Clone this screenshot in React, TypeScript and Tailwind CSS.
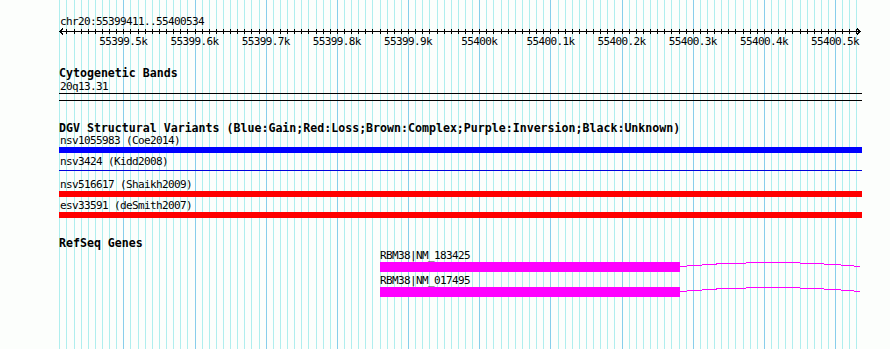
import React from 'react';

const START = 55399411;
const END = 55400534;
const X0 = 60;
const SCALE = 800 / (END - START + 1);
const LEFT = 59; // left edge of the track column

const xOf = (p: number) => X0 + (p - START) * SCALE;
const px = (p: number) => Math.round(xOf(p));

const gridStops: number[] = [];
for (let p = 55399410; p <= 55400530; p += 10) gridStops.push(p);

const majorLabel = (p: number) => {
    const k = p / 1000;
    return `${Number.isInteger(k) ? k : k.toFixed(1)}k`;
};

const variants = [
    { id: 'nsv1055983 (Coe2014)', color: 'bg-[#0000ff]', thin: false },
    { id: 'nsv3424 (Kidd2008)', color: 'bg-[#0000dd]', thin: true },
    { id: 'nsv516617 (Shaikh2009)', color: 'bg-[#ff0000]', thin: false },
    { id: 'esv33591 (deSmith2007)', color: 'bg-[#ff0000]', thin: false },
];

const genes = [
    { name: 'RBM38|NM_183425', exonStart: 55399861, exonEnd: 55400282, end: 55400534 },
    { name: 'RBM38|NM_017495', exonStart: 55399861, exonEnd: 55400282, end: 55400534 },
];

const small = 'text-[11px] tracking-[-0.62px] whitespace-nowrap';

function Grid() {
    return (
        <svg className="absolute inset-0" width={890} height={349} shapeRendering="crispEdges">
            {gridStops.map((p) => {
                const x = px(p) + 0.5;
                return (
                    <line
                        key={p}
                        x1={x}
                        x2={x}
                        y1={0}
                        y2={349}
                        stroke={p % 100 === 0 ? '#87ceeb' : '#afeeee'}
                        strokeWidth={1}
                    />
                );
            })}
        </svg>
    );
}

function Ruler() {
    const ticks = gridStops.filter((p) => p >= START && p <= END);
    const majors = ticks.filter((p) => p % 100 === 0);
    return (
        <svg width={803} height={20} className="block overflow-visible" shapeRendering="crispEdges">
            <line x1={1} x2={801} y1={3.5} y2={3.5} stroke="#000" />
            {ticks.map((p) => {
                const x = px(p) - LEFT + 0.5;
                return <line key={p} x1={x} x2={x} y1={1} y2={6} stroke="#000" />;
            })}
            <polyline points="4,0.5 1,3.5 4,6.5" fill="none" stroke="#000" />
            <polyline points="798,0.5 801,3.5 798,6.5" fill="none" stroke="#000" />
            {majors.map((p) => (
                <text
                    key={p}
                    x={xOf(p) - LEFT}
                    y={17}
                    textAnchor="middle"
                    fontSize={11}
                    letterSpacing={-0.62}
                    fill="#000"
                >
                    {majorLabel(p)}
                </text>
            ))}
        </svg>
    );
}

function Title({ children, className = '' }: { children: React.ReactNode; className?: string }) {
    return <div className={`h-[13px] leading-[13px] text-[11.6px] font-bold whitespace-nowrap ${className}`}>{children}</div>;
}

export default function App() {
    return (
        <div className="relative w-[890px] h-[349px] overflow-hidden bg-[#fcfefc] text-black font-['DejaVu_Sans_Mono',monospace]">
            <Grid />

            <div className="relative pl-[59px] pt-[15px]">
                {/* Overview ruler */}
                <div className={`h-[13px] leading-[13px] pl-px ${small}`}>chr20:55399411..55400534</div>
                <Ruler />

                {/* Cytogenetic bands */}
                <Title className="mt-[19px]">Cytogenetic Bands</Title>
                <div className={`h-[13px] leading-[13px] pl-px ${small}`}>20q13.31</div>
                <div className="h-[8px] w-[803px] border-y border-black" />

                {/* DGV */}
                <Title className="mt-[21px]">
                    DGV Structural Variants (Blue:Gain;Red:Loss;Brown:Complex;Purple:Inversion;Black:Unknown)
                </Title>
                {variants.map((v) => (
                    <div key={v.id} className="mb-[3px]">
                        <div className={`h-[12px] leading-[12px] pl-px ${small}`}>{v.id}</div>
                        <div className="h-[6px] w-[803px]">
                            {v.thin ? (
                                <div className={`mt-[2px] h-px w-full ${v.color}`} />
                            ) : (
                                <div className={`h-full w-full ${v.color}`} />
                            )}
                        </div>
                    </div>
                ))}

                {/* RefSeq */}
                <Title className="mt-[19px]">RefSeq Genes</Title>
                {genes.map((g) => {
                    const a = px(g.exonStart) - LEFT;
                    const b = px(g.exonEnd) - LEFT;
                    const c = px(g.end) - LEFT + 1;
                    const mid = (b + c) / 2;
                    return (
                        <div key={g.name} className="mb-[3px]">
                            <div
                                className={`relative z-10 h-[12px] leading-[11px] ${small}`}
                                style={{ paddingLeft: a }}
                            >
                                {g.name}
                            </div>
                            <svg width={803} height={10} className="block overflow-visible" shapeRendering="crispEdges">
                                <rect x={a} y={0} width={b - a} height={10} fill="#ff00ff" />
                                <path
                                    d={`M ${b} 4.5 Q ${mid} -3.5 ${c} 4.5`}
                                    fill="none"
                                    stroke="#ff00ff"
                                    strokeWidth={1}
                                />
                            </svg>
                        </div>
                    );
                })}
            </div>
        </div>
    );
}
